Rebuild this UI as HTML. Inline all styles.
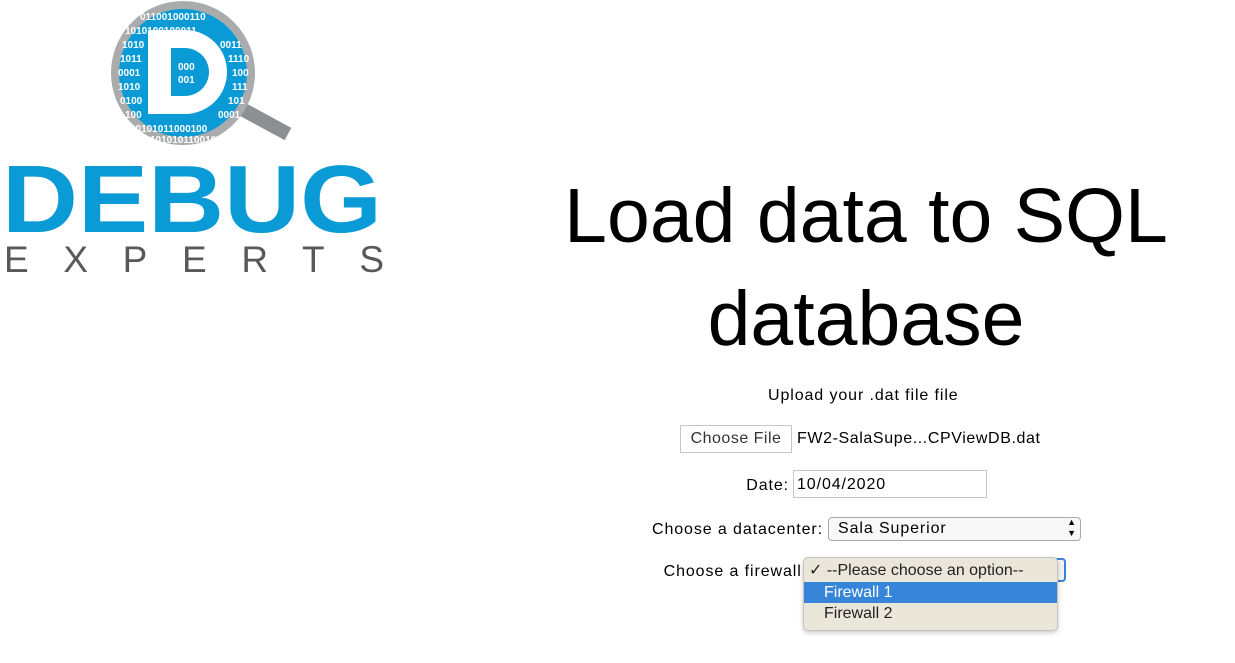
<!DOCTYPE html>
<html><head><meta charset="utf-8"><style>
body{margin:0;width:1235px;height:663px;background:#fff;position:relative;overflow:hidden;font-family:"Liberation Sans",sans-serif;color:#000}
.a{position:absolute;white-space:nowrap}
.t{font-size:77px;left:0;width:1732px;text-align:center;line-height:1}
.s{font-size:16px;letter-spacing:0.9px}
.r{text-align:right}
</style></head><body>
<svg class="a" style="left:0;top:0" width="400" height="290">
<line x1="240" y1="108" x2="288" y2="134" stroke="#8d8f92" stroke-width="14"/>
<circle cx="183" cy="73" r="68" fill="#0a9ad6" stroke="#a9abad" stroke-width="8"/>
<g fill="#fff" font-family="Liberation Sans" font-weight="bold" font-size="10">
<text x="140" y="20">011001000110</text><text x="125" y="34">1010100100011</text>
<text x="122" y="48">1010</text><text x="220" y="48">0011</text>
<text x="120" y="62">1011</text><text x="228" y="62">1110</text>
<text x="118" y="76">0001</text><text x="232" y="76">100</text>
<text x="118" y="90">1010</text><text x="232" y="90">111</text>
<text x="120" y="104">0100</text><text x="228" y="104">101</text>
<text x="125" y="118">100</text><text x="218" y="118">0001</text>
<text x="130" y="132">10101011000100</text><text x="150" y="143">101010110010</text>
</g>
<path d="M148 30 H185 A42 42 0 0 1 185 114 H148 Z M171 48 V96 H185 A24 24 0 0 0 185 48 Z" fill="#fff" fill-rule="evenodd"/>
<text x="178" y="70" font-size="10" font-weight="bold" fill="#fff" font-family="Liberation Sans">000</text>
<text x="178" y="83" font-size="10" font-weight="bold" fill="#fff" font-family="Liberation Sans">001</text>
<text x="2" y="232" font-size="96" font-weight="bold" fill="#0a9ad6" font-family="Liberation Sans" textLength="380" lengthAdjust="spacingAndGlyphs">DEBUG</text>
<text x="4" y="272" font-size="37" fill="#58595b" font-family="Liberation Sans" textLength="380" lengthAdjust="spacing">EXPERTS</text>
</svg>
<div class="a t" style="top:178px">Load data to SQL</div>
<div class="a t" style="top:281px">database</div>
<div class="a s" style="left:768px;top:387px">Upload your .dat file file</div>
<div class="a s" style="left:680px;top:425px;width:110px;height:26px;border:1px solid #c6c6c6;line-height:26px;text-align:center;color:#333;letter-spacing:0.5px">Choose File</div>
<div class="a s" style="left:797px;top:430px;letter-spacing:0.6px">FW2-SalaSupe...CPViewDB.dat</div>
<div class="a s r" style="right:446px;top:477px">Date:</div>
<div class="a s" style="left:793px;top:470px;height:28px;border:1px solid #c6c6c6;line-height:28px;padding-left:3px;box-sizing:border-box;width:194px">10/04/2020</div>
<div class="a s r" style="right:412px;top:521px">Choose a datacenter:</div>
<div class="a s" style="left:828px;top:517px;width:253px;height:24px;border:1px solid #aaa;border-radius:4px;box-sizing:border-box;line-height:22px;padding-left:9px;background:#f8f8f8">Sala Superior<span style="position:absolute;right:4px;top:-1px;font-size:9px;line-height:11px;letter-spacing:0">&#9650;<br>&#9660;</span></div>
<div class="a s r" style="right:428px;top:563px">Choose a firewall:</div>
<div class="a" style="left:805px;top:558px;width:261px;height:24px;border:2px solid #3b7fd8;border-radius:4px;box-sizing:border-box;background:#f3f3f3"></div>
<div class="a" style="left:803px;top:557px;width:255px;height:74px;background:#ebe6da;border:1px solid #c8c3b8;border-radius:5px;box-sizing:border-box;box-shadow:0 2px 5px rgba(0,0,0,.2);font-size:16px;color:#222">
<div style="height:24px;line-height:26px;padding-left:5px">✓ --Please choose an option--</div>
<div style="height:21px;line-height:21px;padding-left:20px;background:#3785d9;color:#fff">Firewall 1</div>
<div style="height:22px;line-height:22px;padding-left:20px">Firewall 2</div>
</div>
</body></html>
